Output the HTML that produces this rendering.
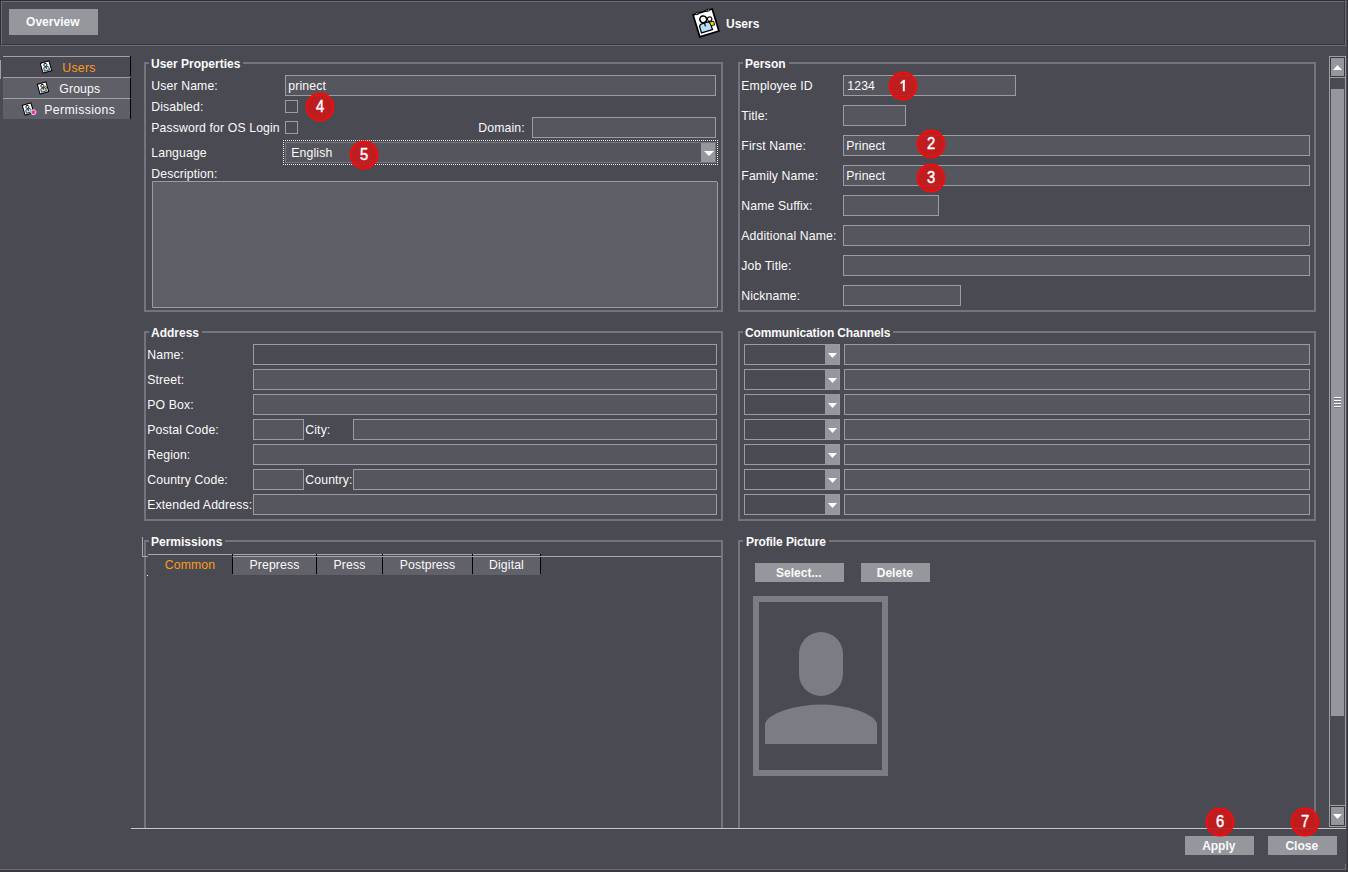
<!DOCTYPE html>
<html><head><meta charset="utf-8"><style>
html,body{margin:0;padding:0;background:#4a4a52;overflow:hidden}
body{width:1348px;height:872px;position:relative}
body>div,body>svg{position:absolute}
.t{font-family:"Liberation Sans",sans-serif;font-size:12.25px;line-height:14px;color:#fafafa;white-space:nowrap;letter-spacing:0.12px}
.b{font-family:"Liberation Sans",sans-serif;font-size:12px;font-weight:bold;line-height:14px;color:#fafafa;white-space:nowrap}
.badge{width:30px;height:30px;color:#fff;font-size:15px;font-weight:bold;line-height:30px;text-align:center}
</style></head><body>
<div style="left:0px;top:0px;width:1348px;height:872px;background:#4a4a52"></div>
<div style="left:1347px;top:0px;width:1px;height:872px;background:#38383e"></div>
<div style="left:0px;top:870px;width:1348px;height:2px;background:#38383e"></div>
<div style="left:0px;top:0px;width:1346px;height:46px;border-top:1px solid #2e2e33;border-left:1px solid #2e2e33;border-right:1px solid #6c6c74;border-bottom:1px solid #6c6c74;box-sizing:border-box"></div>
<div style="left:1px;top:1px;width:1344px;height:44px;border-top:1px solid #6c6c74;border-left:1px solid #6c6c74;border-right:1px solid #38383e;border-bottom:1px solid #38383e;box-sizing:border-box"></div>
<div style="left:9px;top:9px;width:89px;height:26px;background:#96979c"></div>
<div class="b" style="left:8.3px;top:9px;width:89px;height:26px;line-height:26px;text-align:center">Overview</div>
<svg style="left:686px;top:2px" width="40" height="42" viewBox="-20 -21 40 42">
<g transform="translate(0.0 -0.1) rotate(-17)">
<rect x="-10" y="-11.5" width="20" height="23" fill="#fff" stroke="#000" stroke-width="1.7"/>
<path d="M-7.2 -12.6h3v2h-3zM3.8 -12.6h3v2h-3z" fill="#fff" stroke="#000" stroke-width="0.7"/><path d="M-5.7 -13V-10.5M5.3 -13V-10.5" stroke="#000" stroke-width="0.9"/>
<path d="M-7.2 8.2V2.5Q-7.2 -0.3 -4.4 -0.3H1.4Q4.2 -0.3 4.2 2.5V8.2Z" fill="#b4e0f6" stroke="#000" stroke-width="1.3"/>
<path d="M-1.5 -0.3V3.2" stroke="#000" stroke-width="1.2"/>
<circle cx="-1.6" cy="-4.2" r="3.4" fill="#fff" stroke="#000" stroke-width="1.6"/>
<path d="M3.2 0.2L7.8 0.6L7.6 4.6L4.2 4.0Z" fill="#f4d400" stroke="#000" stroke-width="0.8"/>
<circle cx="4.6" cy="-2.6" r="2.2" fill="#fff" stroke="#000" stroke-width="1.1"/>
</g></svg>
<div class="b" style="left:726px;top:17px;">Users</div>
<div style="left:3px;top:56px;width:127px;height:1px;background:#a0a0a4"></div>
<div style="left:130px;top:56px;width:1px;height:20px;background:#000"></div>
<div style="left:3px;top:77px;width:127px;height:1px;background:#a0a0a4"></div>
<div style="left:0px;top:60px;width:1px;height:19px;background:#a0a0a4"></div>
<div style="left:3px;top:78px;width:127px;height:20px;background:#5f5f67"></div>
<div style="left:130px;top:78px;width:1px;height:20px;background:#000"></div>
<div style="left:3px;top:98px;width:127px;height:1px;background:#a0a0a4"></div>
<div style="left:3px;top:99px;width:127px;height:20px;background:#5f5f67"></div>
<div style="left:130px;top:99px;width:1px;height:20px;background:#000"></div>
<div class="t" style="left:62.3px;top:61px;color:#ff9a1e;letter-spacing:0.3px">Users</div>
<div class="t" style="left:59.3px;top:82px;">Groups</div>
<div class="t" style="left:44.3px;top:103px;letter-spacing:0.38px">Permissions</div>
<svg style="left:36px;top:57px" width="20" height="20" viewBox="-10 -10 20 20">
<g transform="rotate(-16)">
<rect x="-4.5" y="-5" width="9" height="10" fill="#fff" stroke="#000" stroke-width="1"/>
<path d="M-2.6 3.7V1.2Q-2.6 -0.1 -1.3 -0.1H1.3Q2.6 -0.1 2.6 1.2V3.7Z" fill="#b0e0f8" stroke="#111" stroke-width="0.7"/>
<path d="M0 -0.1V1.8" stroke="#000" stroke-width="0.8"/>
<circle cx="0" cy="-2.2" r="1.5" fill="#fff" stroke="#000" stroke-width="0.9"/>
</g></svg>
<svg style="left:33px;top:78px" width="20" height="20" viewBox="-10 -10 20 20">
<g transform="rotate(-16)">
<rect x="-4.5" y="-5" width="9" height="10" fill="#fff" stroke="#000" stroke-width="1"/>
<path d="M-2.6 3.7V1.2Q-2.6 -0.1 -1.3 -0.1H1.3Q2.6 -0.1 2.6 1.2V3.7Z" fill="#b0e0f8" stroke="#111" stroke-width="0.7"/>
<path d="M0 -0.1V1.8" stroke="#000" stroke-width="0.8"/>
<circle cx="0" cy="-2.2" r="1.5" fill="#fff" stroke="#000" stroke-width="0.9"/>
<circle cx="2.6" cy="0.2" r="1.1" fill="#f4d400" stroke="#000" stroke-width="0.5"/></g></svg>
<svg style="left:18px;top:99px" width="20" height="20" viewBox="-10 -10 20 20">
<g transform="rotate(-16)">
<rect x="-4.5" y="-5" width="9" height="10" fill="#fff" stroke="#000" stroke-width="1"/>
<path d="M-2.6 3.7V1.2Q-2.6 -0.1 -1.3 -0.1H1.3Q2.6 -0.1 2.6 1.2V3.7Z" fill="#b0e0f8" stroke="#111" stroke-width="0.7"/>
<path d="M0 -0.1V1.8" stroke="#000" stroke-width="0.8"/>
<circle cx="0" cy="-2.2" r="1.5" fill="#fff" stroke="#000" stroke-width="0.9"/>
<circle cx="4.4" cy="4.6" r="2.5" fill="#e040a8" stroke="#fff" stroke-width="0.7"/></g></svg>
<div style="left:144px;top:62px;width:579px;height:250px;border:2px solid #74747c;box-sizing:border-box;"></div>
<div style="left:149px;top:59px;width:94px;height:8px;background:#4a4a52"></div>
<div class="b" style="left:151px;top:57px;letter-spacing:0px">User Properties</div>
<div class="t" style="left:151.3px;top:79px;">User Name:</div>
<div style="left:285px;top:75px;width:431px;height:21px;border:1px solid #9b9ca2;box-sizing:border-box;background:#56565e"></div>
<div class="t" style="left:288.3px;top:79px;">prinect</div>
<div class="t" style="left:151.3px;top:100px;">Disabled:</div>
<div style="left:285px;top:100px;width:13px;height:13px;border:1px solid #9b9ca2;box-sizing:border-box;background:transparent"></div>
<div class="t" style="left:151.3px;top:121px;">Password for OS Login</div>
<div style="left:285px;top:121px;width:13px;height:13px;border:1px solid #9b9ca2;box-sizing:border-box;background:transparent"></div>
<div class="t" style="left:478.3px;top:121px;">Domain:</div>
<div style="left:532px;top:117px;width:184px;height:21px;border:1px solid #9b9ca2;box-sizing:border-box;background:#56565e"></div>
<div class="t" style="left:151.3px;top:146px;">Language</div>
<div style="left:283px;top:140px;width:435px;height:1px;background:repeating-linear-gradient(90deg,#f4f4f4 0 1px,transparent 1px 2px)"></div>
<div style="left:283px;top:164px;width:435px;height:1px;background:repeating-linear-gradient(90deg,#f4f4f4 0 1px,transparent 1px 2px)"></div>
<div style="left:283px;top:140px;width:1px;height:25px;background:repeating-linear-gradient(180deg,#f4f4f4 0 1px,transparent 1px 2px)"></div>
<div style="left:717px;top:140px;width:1px;height:25px;background:repeating-linear-gradient(180deg,#f4f4f4 0 1px,transparent 1px 2px)"></div>
<div style="left:285px;top:142px;width:431px;height:21px;border:1px solid #76767e;box-sizing:border-box;background:#55555d"></div>
<div style="left:701px;top:143px;width:14px;height:19px;background:#96979c"></div>
<svg style="left:704px;top:151px" width="10" height="5" viewBox="0 0 10 5"><path d="M0 0H10L5.0 5Z" fill="#fff"/></svg>
<div class="t" style="left:291.3px;top:146px;">English</div>
<div class="t" style="left:151.3px;top:167px;">Description:</div>
<div style="left:152px;top:181px;width:566px;height:127px;border:1px solid #9b9ca2;box-sizing:border-box;background:#5e5e66;border-radius:0 2px 2px 0"></div>
<div style="left:144px;top:331px;width:579px;height:190px;border:2px solid #74747c;box-sizing:border-box;"></div>
<div style="left:149px;top:328px;width:53px;height:8px;background:#4a4a52"></div>
<div class="b" style="left:151px;top:326px;letter-spacing:0px">Address</div>
<div class="t" style="left:147.3px;top:348px;">Name:</div>
<div style="left:253px;top:344px;width:464px;height:21px;border:1px solid #9b9ca2;box-sizing:border-box;background:#4a4a52"></div>
<div class="t" style="left:147.3px;top:373px;">Street:</div>
<div style="left:253px;top:369px;width:464px;height:21px;border:1px solid #9b9ca2;box-sizing:border-box;background:#56565e"></div>
<div class="t" style="left:147.3px;top:398px;">PO Box:</div>
<div style="left:253px;top:394px;width:464px;height:21px;border:1px solid #9b9ca2;box-sizing:border-box;background:#56565e"></div>
<div class="t" style="left:147.3px;top:423px;">Postal Code:</div>
<div style="left:253px;top:419px;width:51px;height:21px;border:1px solid #9b9ca2;box-sizing:border-box;background:#56565e"></div>
<div class="t" style="left:305.3px;top:423px;">City:</div>
<div style="left:353px;top:419px;width:364px;height:21px;border:1px solid #9b9ca2;box-sizing:border-box;background:#56565e"></div>
<div class="t" style="left:147.3px;top:448px;">Region:</div>
<div style="left:253px;top:444px;width:464px;height:21px;border:1px solid #9b9ca2;box-sizing:border-box;background:#56565e"></div>
<div class="t" style="left:147.3px;top:473px;">Country Code:</div>
<div style="left:253px;top:469px;width:51px;height:21px;border:1px solid #9b9ca2;box-sizing:border-box;background:#56565e"></div>
<div class="t" style="left:305.3px;top:473px;">Country:</div>
<div style="left:353px;top:469px;width:364px;height:21px;border:1px solid #9b9ca2;box-sizing:border-box;background:#56565e"></div>
<div class="t" style="left:147.3px;top:498px;">Extended Address:</div>
<div style="left:253px;top:494px;width:464px;height:21px;border:1px solid #9b9ca2;box-sizing:border-box;background:#56565e"></div>
<div style="left:144px;top:540px;width:579px;height:288px;border:2px solid #74747c;box-sizing:border-box;border-bottom:none;"></div>
<div style="left:149px;top:537px;width:76px;height:8px;background:#4a4a52"></div>
<div class="b" style="left:151px;top:535px;letter-spacing:0px">Permissions</div>
<div style="left:142px;top:537px;width:1px;height:20px;background:#a9a9ad"></div>
<div style="left:142px;top:556px;width:6px;height:1px;background:#a9a9ad"></div>
<div style="left:147px;top:575px;width:1px;height:1px;background:#fff"></div>
<div style="left:148px;top:554px;width:84px;height:1px;background:#a9a9ad"></div>
<div style="left:233px;top:556px;width:488px;height:1px;background:#a9a9ad"></div>
<div class="t" style="left:148px;top:558px;width:84px;text-align:center;color:#ff9a1e">Common</div>
<div style="left:232px;top:554px;width:1px;height:2px;background:#000"></div>
<div style="left:232px;top:557px;width:1px;height:17px;background:#000"></div>
<div style="left:233px;top:554px;width:83px;height:1px;background:#a9a9ad"></div>
<div style="left:233px;top:557px;width:83px;height:18px;background:#616169"></div>
<div class="t" style="left:233px;top:558px;width:83px;text-align:center;">Prepress</div>
<div style="left:316px;top:554px;width:1px;height:2px;background:#000"></div>
<div style="left:316px;top:557px;width:1px;height:17px;background:#000"></div>
<div style="left:317px;top:554px;width:65px;height:1px;background:#a9a9ad"></div>
<div style="left:317px;top:557px;width:65px;height:18px;background:#616169"></div>
<div class="t" style="left:317px;top:558px;width:65px;text-align:center;">Press</div>
<div style="left:382px;top:554px;width:1px;height:2px;background:#000"></div>
<div style="left:382px;top:557px;width:1px;height:17px;background:#000"></div>
<div style="left:383px;top:554px;width:89px;height:1px;background:#a9a9ad"></div>
<div style="left:383px;top:557px;width:89px;height:18px;background:#616169"></div>
<div class="t" style="left:383px;top:558px;width:89px;text-align:center;">Postpress</div>
<div style="left:472px;top:554px;width:1px;height:2px;background:#000"></div>
<div style="left:472px;top:557px;width:1px;height:17px;background:#000"></div>
<div style="left:473px;top:554px;width:67px;height:1px;background:#a9a9ad"></div>
<div style="left:473px;top:557px;width:67px;height:18px;background:#616169"></div>
<div class="t" style="left:473px;top:558px;width:67px;text-align:center;">Digital</div>
<div style="left:540px;top:554px;width:1px;height:2px;background:#000"></div>
<div style="left:540px;top:557px;width:1px;height:17px;background:#000"></div>
<div style="left:738px;top:62px;width:578px;height:250px;border:2px solid #74747c;box-sizing:border-box;"></div>
<div style="left:743px;top:59px;width:46px;height:8px;background:#4a4a52"></div>
<div class="b" style="left:745px;top:57px;letter-spacing:0px">Person</div>
<div class="t" style="left:741.3px;top:79px;">Employee ID</div>
<div style="left:843px;top:75px;width:173px;height:21px;border:1px solid #9b9ca2;box-sizing:border-box;background:#56565e"></div>
<div class="t" style="left:741.3px;top:109px;">Title:</div>
<div style="left:843px;top:105px;width:63px;height:21px;border:1px solid #9b9ca2;box-sizing:border-box;background:#56565e"></div>
<div class="t" style="left:741.3px;top:139px;">First Name:</div>
<div style="left:843px;top:135px;width:467px;height:21px;border:1px solid #9b9ca2;box-sizing:border-box;background:#56565e"></div>
<div class="t" style="left:741.3px;top:169px;">Family Name:</div>
<div style="left:843px;top:165px;width:467px;height:21px;border:1px solid #9b9ca2;box-sizing:border-box;background:#56565e"></div>
<div class="t" style="left:741.3px;top:199px;">Name Suffix:</div>
<div style="left:843px;top:195px;width:96px;height:21px;border:1px solid #9b9ca2;box-sizing:border-box;background:#56565e"></div>
<div class="t" style="left:741.3px;top:229px;">Additional Name:</div>
<div style="left:843px;top:225px;width:467px;height:21px;border:1px solid #9b9ca2;box-sizing:border-box;background:#56565e"></div>
<div class="t" style="left:741.3px;top:259px;">Job Title:</div>
<div style="left:843px;top:255px;width:467px;height:21px;border:1px solid #9b9ca2;box-sizing:border-box;background:#56565e"></div>
<div class="t" style="left:741.3px;top:289px;">Nickname:</div>
<div style="left:843px;top:285px;width:118px;height:21px;border:1px solid #9b9ca2;box-sizing:border-box;background:#56565e"></div>
<div class="t" style="left:847.3px;top:79px;">1234</div>
<div class="t" style="left:846.3px;top:139px;">Prinect</div>
<div class="t" style="left:846.3px;top:169px;">Prinect</div>
<div style="left:738px;top:331px;width:578px;height:190px;border:2px solid #74747c;box-sizing:border-box;"></div>
<div style="left:743px;top:328px;width:150px;height:8px;background:#4a4a52"></div>
<div class="b" style="left:745px;top:326px;letter-spacing:-0.12px">Communication Channels</div>
<div style="left:744px;top:344px;width:96px;height:21px;border:1px solid #9b9ca2;box-sizing:border-box;background:#4a4a52"></div>
<div style="left:825px;top:345px;width:14px;height:19px;background:#96979c"></div>
<svg style="left:828px;top:353px" width="9" height="5" viewBox="0 0 9 5"><path d="M0 0H9L4.5 5Z" fill="#fff"/></svg>
<div style="left:844px;top:344px;width:466px;height:21px;border:1px solid #9b9ca2;box-sizing:border-box;background:#56565e"></div>
<div style="left:744px;top:369px;width:96px;height:21px;border:1px solid #9b9ca2;box-sizing:border-box;background:#4a4a52"></div>
<div style="left:825px;top:370px;width:14px;height:19px;background:#96979c"></div>
<svg style="left:828px;top:378px" width="9" height="5" viewBox="0 0 9 5"><path d="M0 0H9L4.5 5Z" fill="#fff"/></svg>
<div style="left:844px;top:369px;width:466px;height:21px;border:1px solid #9b9ca2;box-sizing:border-box;background:#56565e"></div>
<div style="left:744px;top:394px;width:96px;height:21px;border:1px solid #9b9ca2;box-sizing:border-box;background:#4a4a52"></div>
<div style="left:825px;top:395px;width:14px;height:19px;background:#96979c"></div>
<svg style="left:828px;top:403px" width="9" height="5" viewBox="0 0 9 5"><path d="M0 0H9L4.5 5Z" fill="#fff"/></svg>
<div style="left:844px;top:394px;width:466px;height:21px;border:1px solid #9b9ca2;box-sizing:border-box;background:#56565e"></div>
<div style="left:744px;top:419px;width:96px;height:21px;border:1px solid #9b9ca2;box-sizing:border-box;background:#4a4a52"></div>
<div style="left:825px;top:420px;width:14px;height:19px;background:#96979c"></div>
<svg style="left:828px;top:428px" width="9" height="5" viewBox="0 0 9 5"><path d="M0 0H9L4.5 5Z" fill="#fff"/></svg>
<div style="left:844px;top:419px;width:466px;height:21px;border:1px solid #9b9ca2;box-sizing:border-box;background:#56565e"></div>
<div style="left:744px;top:444px;width:96px;height:21px;border:1px solid #9b9ca2;box-sizing:border-box;background:#4a4a52"></div>
<div style="left:825px;top:445px;width:14px;height:19px;background:#96979c"></div>
<svg style="left:828px;top:453px" width="9" height="5" viewBox="0 0 9 5"><path d="M0 0H9L4.5 5Z" fill="#fff"/></svg>
<div style="left:844px;top:444px;width:466px;height:21px;border:1px solid #9b9ca2;box-sizing:border-box;background:#56565e"></div>
<div style="left:744px;top:469px;width:96px;height:21px;border:1px solid #9b9ca2;box-sizing:border-box;background:#4a4a52"></div>
<div style="left:825px;top:470px;width:14px;height:19px;background:#96979c"></div>
<svg style="left:828px;top:478px" width="9" height="5" viewBox="0 0 9 5"><path d="M0 0H9L4.5 5Z" fill="#fff"/></svg>
<div style="left:844px;top:469px;width:466px;height:21px;border:1px solid #9b9ca2;box-sizing:border-box;background:#56565e"></div>
<div style="left:744px;top:494px;width:96px;height:21px;border:1px solid #9b9ca2;box-sizing:border-box;background:#4a4a52"></div>
<div style="left:825px;top:495px;width:14px;height:19px;background:#96979c"></div>
<svg style="left:828px;top:503px" width="9" height="5" viewBox="0 0 9 5"><path d="M0 0H9L4.5 5Z" fill="#fff"/></svg>
<div style="left:844px;top:494px;width:466px;height:21px;border:1px solid #9b9ca2;box-sizing:border-box;background:#56565e"></div>
<div style="left:738px;top:540px;width:578px;height:288px;border:2px solid #74747c;box-sizing:border-box;border-bottom:none;"></div>
<div style="left:743px;top:537px;width:86px;height:8px;background:#4a4a52"></div>
<div class="b" style="left:746px;top:535px;letter-spacing:-0.1px">Profile Picture</div>
<div style="left:755px;top:563px;width:89px;height:19px;background:#96979c"></div>
<div class="b" style="left:754.3px;top:564px;width:89px;height:19px;line-height:19px;text-align:center">Select...</div>
<div style="left:861px;top:563px;width:69px;height:19px;background:#96979c"></div>
<div class="b" style="left:860.3px;top:564px;width:69px;height:19px;line-height:19px;text-align:center">Delete</div>
<div style="left:753px;top:596px;width:135px;height:180px;border:6px solid #7b7c84;box-sizing:border-box"></div>
<div style="left:799px;top:632px;width:44px;height:64px;background:#7b7c84;border-radius:22px"></div>
<svg style="left:765px;top:704px" width="112" height="41" viewBox="0 0 112 41"><path d="M0 21 Q0 13 20 6 Q38 0.5 56 0.5 Q74 0.5 92 6 Q112 13 112 21 V40 H0Z" fill="#7b7c84"/></svg>
<div style="left:1329px;top:56px;width:17px;height:771px;border:1px solid #a0a0a4;box-sizing:border-box"></div>
<div style="left:1330px;top:57px;width:15px;height:20px;border:1px solid #38383e;background:#96979c;box-sizing:border-box"></div>
<svg style="left:1333px;top:65px" width="9" height="5" viewBox="0 0 9 5"><path d="M0 5H9L4.5 0Z" fill="#fff"/></svg>
<div style="left:1330px;top:77px;width:15px;height:1px;background:#a0a0a4"></div>
<div style="left:1331px;top:89px;width:13px;height:627px;background:#96979c"></div>
<div style="left:1334px;top:397px;width:7px;height:1px;background:#fff"></div>
<div style="left:1334px;top:398px;width:7px;height:1px;background:#767684"></div>
<div style="left:1334px;top:400px;width:7px;height:1px;background:#fff"></div>
<div style="left:1334px;top:401px;width:7px;height:1px;background:#767684"></div>
<div style="left:1334px;top:403px;width:7px;height:1px;background:#fff"></div>
<div style="left:1334px;top:404px;width:7px;height:1px;background:#767684"></div>
<div style="left:1334px;top:406px;width:7px;height:1px;background:#fff"></div>
<div style="left:1334px;top:407px;width:7px;height:1px;background:#767684"></div>
<div style="left:1330px;top:805px;width:15px;height:1px;background:#a0a0a4"></div>
<div style="left:1330px;top:806px;width:15px;height:20px;border:1px solid #38383e;background:#96979c;box-sizing:border-box"></div>
<svg style="left:1333px;top:814px" width="9" height="5" viewBox="0 0 9 5"><path d="M0 0H9L4.5 5Z" fill="#fff"/></svg>
<div style="left:131px;top:828px;width:1215px;height:1px;background:#c8c8cc"></div>
<div style="left:131px;top:829px;width:1215px;height:1px;background:#45454c"></div>
<div style="left:1346px;top:829px;width:1px;height:41px;background:#44444a"></div>
<div style="left:1345px;top:864px;width:1px;height:6px;background:#6c6c74"></div>
<div style="left:0px;top:869px;width:1346px;height:1px;background:#6c6c74"></div>
<div style="left:1185px;top:836px;width:69px;height:19px;background:#96979c"></div>
<div class="b" style="left:1184.3px;top:837px;width:69px;height:19px;line-height:19px;text-align:center">Apply</div>
<div style="left:1268px;top:836px;width:69px;height:19px;background:#96979c"></div>
<div class="b" style="left:1267.3px;top:837px;width:69px;height:19px;line-height:19px;text-align:center">Close</div>
<svg style="left:888px;top:71px" width="30" height="30" viewBox="0 0 30 30"><circle cx="15" cy="15" r="13.4" fill="#c8191c" fill-opacity="0.92" stroke="#f20c0c" stroke-width="2"/></svg>
<svg style="left:888px;top:71px" width="30" height="30" viewBox="0 0 30 30"><path d="M15.8 9.2V20.2" stroke="#fff" stroke-width="2"/><path d="M16.6 9.2L12.6 12.4" stroke="#fff" stroke-width="1.6"/></svg>
<svg style="left:916px;top:129px" width="30" height="30" viewBox="0 0 30 30"><circle cx="15" cy="15" r="13.4" fill="#c8191c" fill-opacity="0.92" stroke="#f20c0c" stroke-width="2"/></svg>
<div class="badge" style="left:916px;top:129px;font-family:'Liberation Sans', sans-serif;font-weight:normal;font-size:16px;-webkit-text-stroke:0.45px #fff;transform:scaleX(0.92)">2</div>
<svg style="left:916px;top:163px" width="30" height="30" viewBox="0 0 30 30"><circle cx="15" cy="15" r="13.4" fill="#c8191c" fill-opacity="0.92" stroke="#f20c0c" stroke-width="2"/></svg>
<div class="badge" style="left:916px;top:163px;font-family:'Liberation Sans', sans-serif;font-weight:normal;font-size:16px;-webkit-text-stroke:0.45px #fff;transform:scaleX(0.92)">3</div>
<svg style="left:305px;top:92px" width="30" height="30" viewBox="0 0 30 30"><circle cx="15" cy="15" r="13.4" fill="#c8191c" fill-opacity="0.92" stroke="#f20c0c" stroke-width="2"/></svg>
<div class="badge" style="left:305px;top:92px;font-family:'Liberation Sans', sans-serif;font-weight:normal;font-size:16px;-webkit-text-stroke:0.45px #fff;transform:scaleX(0.92)">4</div>
<svg style="left:349px;top:140px" width="30" height="30" viewBox="0 0 30 30"><circle cx="15" cy="15" r="13.4" fill="#c8191c" fill-opacity="0.92" stroke="#f20c0c" stroke-width="2"/></svg>
<div class="badge" style="left:349px;top:140px;font-family:'Liberation Sans', sans-serif;font-weight:normal;font-size:16px;-webkit-text-stroke:0.45px #fff;transform:scaleX(0.92)">5</div>
<svg style="left:1205px;top:807px" width="30" height="30" viewBox="0 0 30 30"><circle cx="15" cy="15" r="13.4" fill="#c8191c" fill-opacity="0.92" stroke="#f20c0c" stroke-width="2"/></svg>
<div class="badge" style="left:1205px;top:807px;font-family:'Liberation Sans', sans-serif;font-weight:normal;font-size:16px;-webkit-text-stroke:0.45px #fff;transform:scaleX(0.92)">6</div>
<svg style="left:1290px;top:807px" width="30" height="30" viewBox="0 0 30 30"><circle cx="15" cy="15" r="13.4" fill="#c8191c" fill-opacity="0.92" stroke="#f20c0c" stroke-width="2"/></svg>
<div class="badge" style="left:1290px;top:807px;font-family:'Liberation Sans', sans-serif;font-weight:normal;font-size:16px;-webkit-text-stroke:0.45px #fff;transform:scaleX(0.92)">7</div>
</body></html>
